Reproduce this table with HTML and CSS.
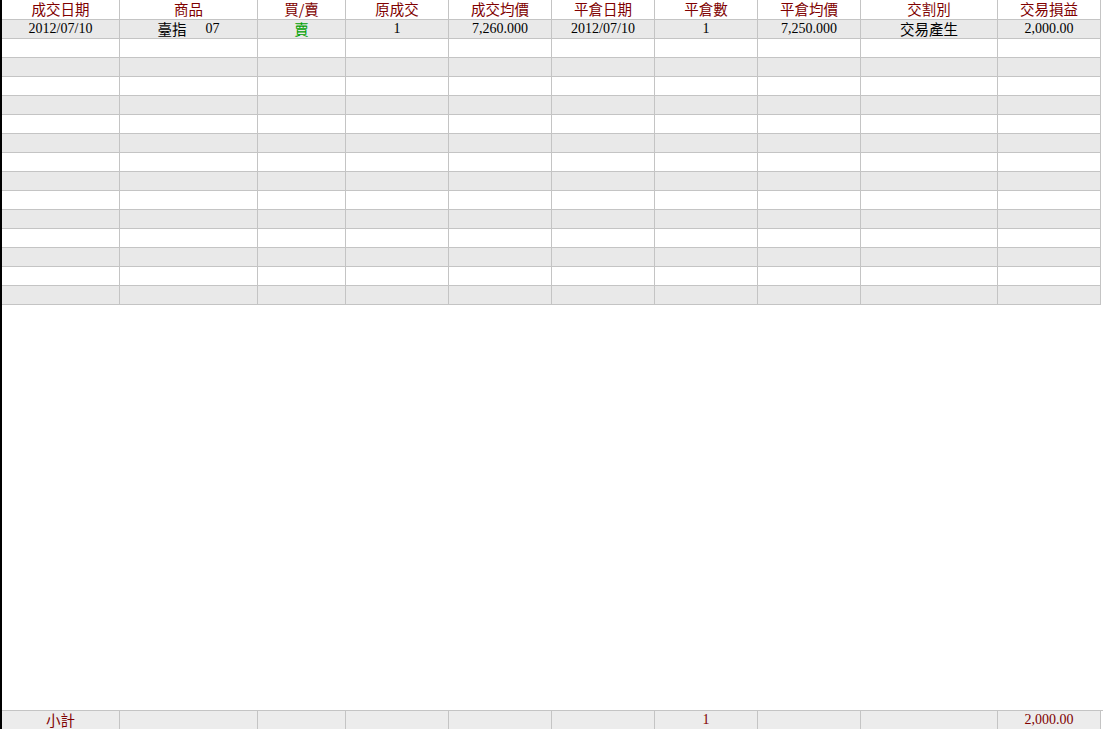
FILE: index.html
```html
<!DOCTYPE html>
<html lang="zh-Hant">
<head>
    <meta charset="UTF-8">
    <title>平倉明細</title>
    <link rel="stylesheet" href="styles.css">
</head>
<body>
    <div class="sheet">
        <div class="grid">
            <div class="row head">
                <div class="cell">成交日期</div>
                <div class="cell">商品</div>
                <div class="cell">買/賣</div>
                <div class="cell">原成交</div>
                <div class="cell">成交均價</div>
                <div class="cell">平倉日期</div>
                <div class="cell">平倉數</div>
                <div class="cell">平倉均價</div>
                <div class="cell">交割別</div>
                <div class="cell">交易損益</div>
            </div>
            <div class="row odd">
                <div class="cell">2012/07/10</div>
                <div class="cell"><span class="cjk">臺指</span><span class="month">07</span></div>
                <div class="cell"><span class="cjk sell">賣</span></div>
                <div class="cell">1</div>
                <div class="cell">7,260.000</div>
                <div class="cell">2012/07/10</div>
                <div class="cell">1</div>
                <div class="cell">7,250.000</div>
                <div class="cell"><span class="cjk">交易產生</span></div>
                <div class="cell">2,000.00</div>
            </div>
        </div>
        <div class="spacer"></div>
        <div class="row total">
            <div class="cell"><span class="cjk">小計</span></div>
            <div class="cell"></div>
            <div class="cell"></div>
            <div class="cell"></div>
            <div class="cell"></div>
            <div class="cell"></div>
            <div class="cell">1</div>
            <div class="cell"></div>
            <div class="cell"></div>
            <div class="cell">2,000.00</div>
        </div>
    </div>

    <script>
        // fill the empty rows below the first trade
        const grid = document.querySelector(".grid");
        for (let i = 1; i < 15; i++) {
            const row = document.createElement("div");
            row.className = "row " + (i % 2 === 0 ? "odd" : "even");
            for (let c = 0; c < 10; c++) {
                const cell = document.createElement("div");
                cell.className = "cell";
                row.appendChild(cell);
            }
            grid.appendChild(row);
        }
    </script>
</body>
</html>
```

FILE: styles.css
```css
* {
    margin: 0;
    padding: 0;
    box-sizing: border-box;
}

body {
    background: #ffffff;
    font-family: 'Liberation Serif', 'Noto Sans CJK TC', serif;
    font-size: 14px;
    color: #000000;
}

.sheet {
    display: flex;
    flex-direction: column;
    height: 729px;
    width: 1103px;
    border-left: 2px solid #000000;
}

.spacer {
    flex: 1;
}

.row {
    display: grid;
    grid-template-columns: 118px 138px 88px 103px 103px 103px 103px 103px 137px 103px;
    height: 19px;
}

.row.head {
    height: 20px;
}

.cell {
    border-right: 1px solid #c4c4c4;
    border-bottom: 1px solid #c4c4c4;
    text-align: center;
    line-height: 18px;
    white-space: nowrap;
}

.head .cell {
    font-family: 'Noto Sans CJK TC', sans-serif;
    font-size: 14.5px;
    line-height: 18px;
    color: #800000;
    background: #ffffff;
}

.odd .cell {
    background: #e9e9e9;
}

.even .cell {
    background: #ffffff;
}

.total {
    border-top: 1px solid #c4c4c4;
    height: 19px;
}

.total .cell {
    background: #ececec;
    color: #800000;
}

.cjk {
    display: inline-block;
    vertical-align: top;
    height: 18px;
    font-family: 'Noto Sans CJK TC', sans-serif;
    font-size: 14.5px;
    line-height: 18px;
}

.month {
    margin-left: 19px;
}

.sell {
    color: #00a000;
}
```
